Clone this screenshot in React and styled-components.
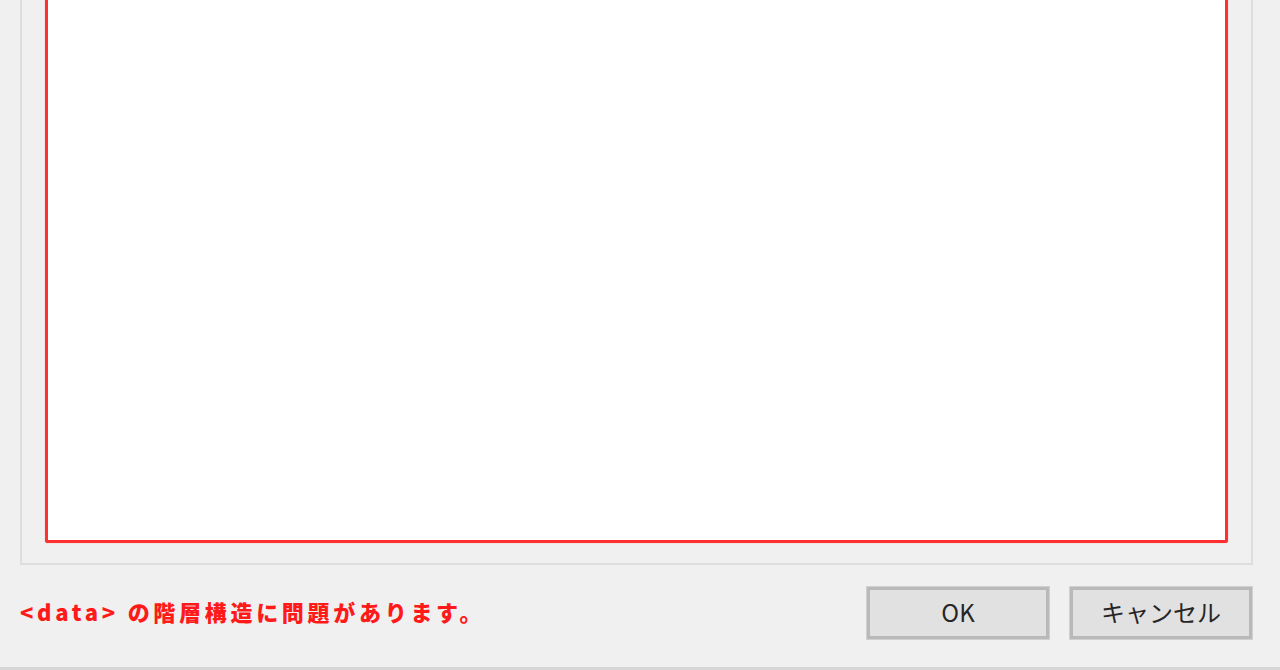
import React from 'react'
import styled, { createGlobalStyle } from 'styled-components'

const Global = createGlobalStyle`
html, body {
  margin: 0;
  padding: 0;
  background: #f0f0f0;
  overflow: hidden;
}
`

const Window = styled.div`
width: 1280px;
height: 670px;
box-sizing: border-box;
background: #f0f0f0;
border-bottom: 3px solid #d6d6d6;
display: flex;
flex-direction: column;
`

const GroupBox = styled.div`
margin-left: 20px;
width: 1233px;
height: 565px;
box-sizing: border-box;
border: 2px solid #dedede;
border-top: none;
padding: 0 23px 20px 23px;
display: flex;
`

const Editor = styled.div`
flex: 1;
background: #fff;
border: 3px solid #ff3030;
border-top: none;
border-radius: 0 0 3px 3px;
box-shadow: 0 0 1px rgba(255, 60, 60, 0.6);
`

const Footer = styled.div`
flex: 1;
display: flex;
align-items: center;
padding: 0 28px 6px 20px;
`

const Message = styled.div`
flex: 1;
color: #ff1a1a;
font-family: "Noto Sans CJK JP", "Noto Sans", sans-serif;
font-weight: 900;
font-size: 22px;
letter-spacing: 3.7px;
padding-bottom: 4px;
`

const Buttons = styled.div`
display: flex;
gap: 21px;
`

const Button = styled.button`
width: 182px;
height: 52px;
box-sizing: border-box;
background: #e1e1e1;
border: 3px solid #b9b9b9;
outline: 1px solid #d0d0d0;
color: #262626;
font-family: "Noto Sans CJK JP", "Noto Sans", sans-serif;
font-size: 24px;
padding: 0 0 3px;
display: flex;
align-items: center;
justify-content: center;
`

export default function App() {
  return (
    <>
      <Global />
      <Window>
        <GroupBox>
          <Editor />
        </GroupBox>
        <Footer>
          <Message>&lt;data&gt; の階層構造に問題があります。</Message>
          <Buttons>
            <Button>OK</Button>
            <Button>キャンセル</Button>
          </Buttons>
        </Footer>
      </Window>
    </>
  )
}
